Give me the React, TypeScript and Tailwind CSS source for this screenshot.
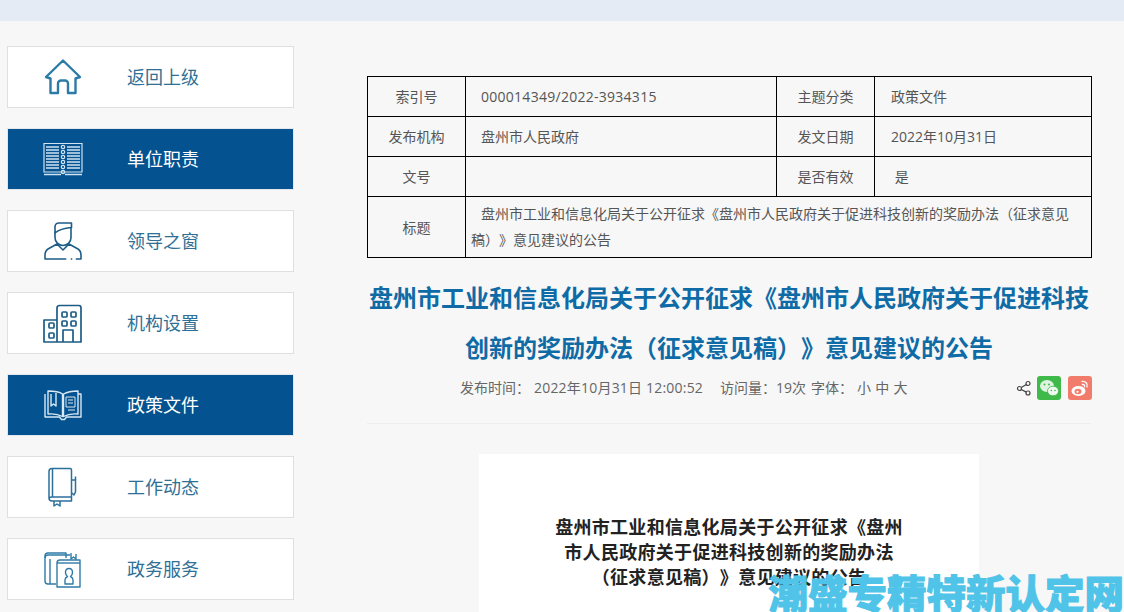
const cjk = "font-['Open_Sans','Noto_Sans_CJK_SC',sans-serif] [text-spacing-trim:space-all]";

const HomeIcon = () => (
  <svg viewBox="0 0 40 40" className="h-10 w-10" fill="none" stroke="#2b7ba6" strokeWidth="2.4" strokeLinejoin="round" strokeLinecap="round">
    <path d="M7.500 21.500 3 20 20 3.500 37 20l-4.500 1.500V36H25V26.500a3 3 0 0 0-3-3h-4a3 3 0 0 0-3 3V36H7.500Z" />
  </svg>
);

const ListBookIcon = () => (
  <svg viewBox="0 0 40 40" className="h-10 w-10" fill="none" stroke="#cfe3f2" strokeWidth="1.2">
    <path d="M1 4.500h38V33H1Z" />
    <path d="M3 8h13M3 11h13M3 14h13M3 17h13M3 20h13M3 23h13M3 26h13M3 29h13" strokeWidth="1.500" />
    <path d="M24 8h13M24 11h13M24 14h13M24 17h13M24 20h13M24 23h13M24 26h13M24 29h13" strokeWidth="1.500" />
    <path d="M1 35.500h17M22 35.500h17" strokeWidth="1.400" />
    <circle cx="20" cy="8" r="1.700" />
    <circle cx="20" cy="13" r="1.700" />
    <circle cx="20" cy="18" r="1.700" />
    <circle cx="20" cy="23" r="1.700" />
    <circle cx="20" cy="28" r="1.700" />
    <circle cx="20" cy="33" r="1.700" />
  </svg>
);

const PersonIcon = () => (
  <svg viewBox="0 0 40 40" className="h-10 w-10" fill="none" stroke="#1d5c86" strokeWidth="1.600" strokeLinecap="round" strokeLinejoin="round">
    <path d="M12 12V6c0-2.500 1.500-4 4-4h12.500v4.500c-5 .5-11 1-16.500 5.500" />
    <path d="M12 12v4.500c0 4.500 3.500 8 8 8s8-3.500 8-8V6.500" />
    <path d="M14 23 5 28c-2.500 1.500-3 4-3 6.500V38h36v-3.500c0-2.500-.5-5-3-6.500l-9-5-6 6Z" />
    <path d="M24 38h3M30 38h2" stroke="#ffffff" strokeWidth="2" />
  </svg>
);

const BuildingIcon = () => (
  <svg viewBox="0 0 40 40" className="h-10 w-10" fill="none" stroke="#1d5c86" strokeWidth="1.700" strokeLinejoin="round">
    <path d="M14 39V5c0-1.500 1-2.500 2.500-2.500H36c1.500 0 2 1 2 2.500v34H1V17h13" />
    <path d="M20 39V27h10v12" />
    <rect x="19" y="9" width="5" height="5" rx="1" />
    <rect x="28" y="9" width="5" height="5" rx="1" />
    <rect x="19" y="18" width="5" height="5" rx="1" />
    <rect x="28" y="18" width="5" height="5" rx="1" />
    <rect x="6" y="20" width="5" height="5" rx="1" />
    <rect x="6" y="30" width="5" height="5" rx="1" />
  </svg>
);

const OpenBookIcon = () => (
  <svg viewBox="0 0 40 40" className="h-10 w-10" fill="none" stroke="#d8e8f4" strokeWidth="1.400" strokeLinejoin="round">
    <path d="M2 9v23h14.500l2 2.500h3l2-2.500H38V9h-3" />
    <path d="M5 9v20c5-.5 10 0 14.500 2.500V9C16 6.500 10 6 5 6Z" />
    <path d="M20.500 31.500C25 29 30 28.500 35 29V6c-5 0-10 .5-14.500 3Z" />
    <path d="M8 9v12l2.500-2 2.500 2V8" />
    <path d="M23 12h9v10h-9Z" strokeWidth="1" />
    <path d="M25 15h5M25 18h5M25 25h7" strokeWidth="1.200" />
  </svg>
);

const NotebookIcon = () => (
  <svg viewBox="0 0 40 40" className="h-10 w-10" fill="none" stroke="#2b6f9c" strokeWidth="1.500" strokeLinejoin="round">
    <path d="M28.500 30V3c0-1-.5-1.500-1.500-1.500H9C7 1.500 6 2.500 6 4.500V31c0 2 1 3 3 3h19.500v-4H9c-2 0-3 1-3 2" />
    <path d="M9.500 2v28" />
    <path d="M11 34v5l3-2 3 2v-5" />
    <path d="M29 13h3.500v12L31 28l-2-2" />
    <path d="M32.500 13V9.500" />
  </svg>
);

const FolderIcon = () => (
  <svg viewBox="0 0 40 40" className="h-10 w-10" fill="none" stroke="#2f7ba6" strokeWidth="1.400" strokeLinejoin="round">
    <path d="M13 35H5c-1.500 0-3-1-3-3V7c0-2 1-3 3-3h18v5" />
    <path d="M2 9c0-2 1.500-3 3-3h22" />
    <path d="M7 10v25" />
    <path d="M14 38V14c0-2 1-3 3-3h20v27Z" />
    <path d="M14 14h23" />
    <path d="M28 4v6l2.500-2 2.500 2V5" />
    <path d="M22 35v-4c0-2 1.500-3 2.500-3.500-1.500-1-2-2.500-2-4 0-2.500 1.500-4 3.500-4s3.500 1.500 3.500 4c0 1.500-.5 3-2 4 1 .5 2.500 1.500 2.500 3.500v4Z" />
  </svg>
);

const items = [
  { label: "返回上级", icon: <HomeIcon /> },
  { label: "单位职责", icon: <ListBookIcon />, active: true },
  { label: "领导之窗", icon: <PersonIcon /> },
  { label: "机构设置", icon: <BuildingIcon /> },
  { label: "政策文件", icon: <OpenBookIcon />, active: true },
  { label: "工作动态", icon: <NotebookIcon /> },
  { label: "政务服务", icon: <FolderIcon /> },
];

const Sidebar = () => (
  <div className="flex w-[287px] shrink-0 flex-col gap-5 pt-[25px]">
    {items.map((item) => (
      <div
        key={item.label}
        className={
          item.active
            ? "flex h-[62px] items-center gap-[44px] border border-[#e3e6ea] bg-[#04528f] pl-[35px] text-[18px] text-white"
            : "flex h-[62px] items-center gap-[44px] border border-[#dfdfdf] bg-white pl-[35px] text-[18px] text-[#2f6f96]"
        }
      >
        {item.icon}
        <span>{item.label}</span>
      </div>
    ))}
  </div>
);

const label = "border border-black text-center font-normal";
const value = "border border-black pl-[15px] text-left font-normal";
const lastValue = "border border-black pl-[16px] text-left font-normal";

const InfoTable = () => (
  <table className="w-[724px] table-fixed border-collapse text-[14px] text-[#555]">
    <colgroup>
      <col className="w-[98px]" />
      <col className="w-[311px]" />
      <col className="w-[98px]" />
      <col className="w-[217px]" />
    </colgroup>
    <tbody>
      <tr className="h-10">
        <td className={label}>索引号</td>
        <td className={`${value} tracking-[0.27px]`}>000014349/2022-3934315</td>
        <td className={label}>主题分类</td>
        <td className={lastValue}>政策文件</td>
      </tr>
      <tr className="h-10">
        <td className={label}>发布机构</td>
        <td className={value}>盘州市人民政府</td>
        <td className={label}>发文日期</td>
        <td className={lastValue}>2022年10月31日</td>
      </tr>
      <tr className="h-10">
        <td className={label}>文号</td>
        <td className={value}></td>
        <td className={label}>是否有效</td>
        <td className={lastValue}>&nbsp;是</td>
      </tr>
      <tr className="h-[61px]">
        <td className={label}>标题</td>
        <td colSpan={3} className="border border-black pr-[20px] pl-[5px] indent-[10px] leading-[26px]">
          盘州市工业和信息化局关于公开征求《盘州市人民政府关于促进科技创新的奖励办法（征求意见稿）》意见建议的公告
        </td>
      </tr>
    </tbody>
  </table>
);

const ShareRow = () => (
  <div className="-mr-px mt-[1px] flex items-center">
    <svg viewBox="0 0 16 16" className="mr-[5px] h-4 w-4" fill="none" stroke="#444" strokeWidth="1.200">
      <circle cx="12" cy="3.500" r="2" />
      <circle cx="3.500" cy="8.500" r="2" />
      <circle cx="12" cy="13" r="2" />
      <path d="M5.300 7.500 10.300 4.500M5.300 9.500l5 2.600" />
    </svg>
    <div className="flex h-6 w-6 items-center justify-center rounded-[3px] bg-[#3fb94a]">
      <svg viewBox="0 0 24 24" className="h-6 w-6">
        <ellipse cx="10" cy="10" rx="7" ry="6" fill="#dff3e0" />
        <ellipse cx="16" cy="15" rx="5.500" ry="4.800" fill="#f1faf1" stroke="#3fb94a" strokeWidth="0.800" />
        <circle cx="7.500" cy="8.500" r="1" fill="#3fb94a" />
        <circle cx="12" cy="8.500" r="1" fill="#3fb94a" />
        <circle cx="14.300" cy="14.500" r="0.800" fill="#3fb94a" />
        <circle cx="18" cy="14.500" r="0.800" fill="#3fb94a" />
      </svg>
    </div>
    <div className="ml-[7px] flex h-6 w-6 items-center justify-center rounded-[3px] bg-[#f27c6c]">
      <svg viewBox="0 0 24 24" className="h-6 w-6" fill="none">
        <ellipse cx="10.500" cy="15" rx="7" ry="5" fill="#fff" />
        <ellipse cx="10" cy="15.500" rx="3.500" ry="2.700" fill="#f27c6c" />
        <circle cx="9.500" cy="15.800" r="1.100" fill="#fff" />
        <path d="M14 5.500c3.500-.5 6 2 5 5.500M14.500 8.500c1.500-.3 2.500.8 2 2.300" stroke="#fff" strokeWidth="1.300" strokeLinecap="round" />
      </svg>
    </div>
  </div>
);

const Article = () => (
  <div className="flex w-[724px] flex-col">
    <InfoTable />
    <h1 className="mt-[15px] text-center text-[24px] leading-[50px] font-bold text-[#0f6ba6]">
      盘州市工业和信息化局关于公开征求《盘州市人民政府关于促进科技
      <br />
      创新的奖励办法（征求意见稿）》意见建议的公告
    </h1>
    <div className="flex h-[28px] items-center text-[14px] text-[#666]">
      <div className="flex flex-1 pl-[93px]">
        <span>发布时间：</span>
        <span className="ml-[4px] tracking-[0.2px]">2022年10月31日 12:00:52</span>
        <span className="ml-[17px]">访问量：19次</span>
        <span className="ml-[5px]">字体：</span>
        <span className="ml-[4px] tracking-[0.3px]">小 中 大</span>
      </div>
      <ShareRow />
    </div>
    <div className="mt-[22px] h-px bg-[#eeeeee]" />
    <div className="mx-auto mt-[30px] h-[200px] w-[500px] bg-white pt-[61px] text-center text-[18px] leading-[25px] font-bold tracking-[0.3px] text-[#222]">
      盘州市工业和信息化局关于公开征求《盘州
      <br />
      市人民政府关于促进科技创新的奖励办法
      <br />
      （征求意见稿）》意见建议的公告
    </div>
  </div>
);

export default function App() {
  return (
    <div className={`relative h-[612px] overflow-hidden bg-[#f7f7f7] ${cjk}`}>
      <div className="h-[21px] bg-[#e4ebf5]" />
      <div className="flex pl-[7px]">
        <Sidebar />
        <div className="ml-[73px] pt-[55px]">
          <Article />
        </div>
      </div>
      <div className="absolute right-0 bottom-[-6px] text-[39.500px] leading-[48px] font-black whitespace-nowrap text-[#4fc3e8] [-webkit-text-stroke:1px_#4fc3e8]">
        潮盛专精特新认定网
      </div>
    </div>
  );
}
